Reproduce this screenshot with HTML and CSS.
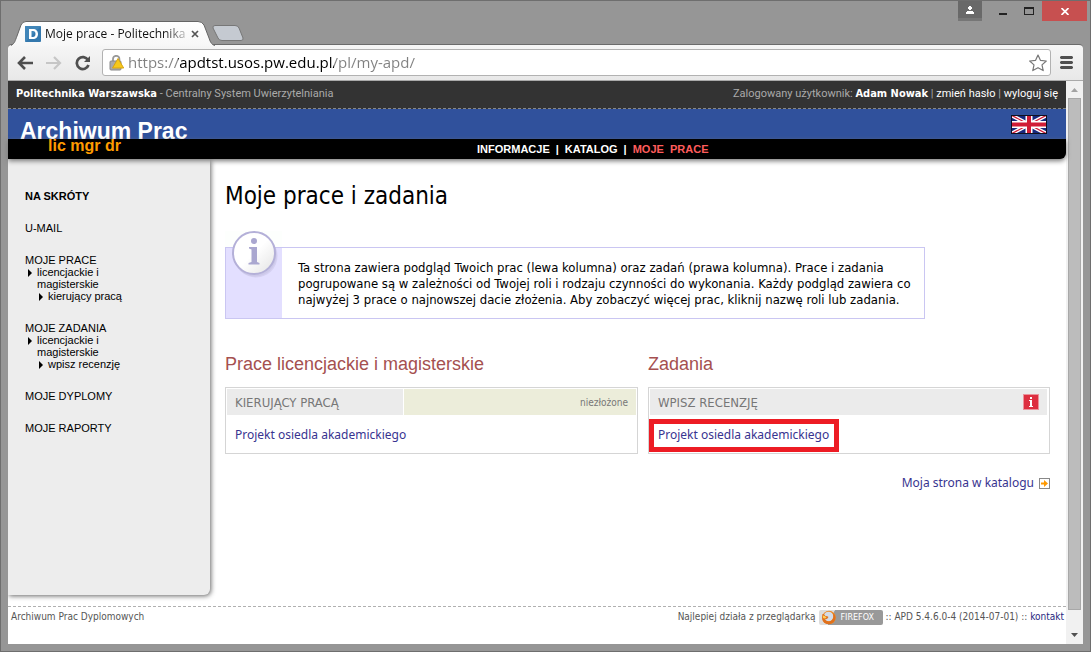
FILE: index.html
```
<!DOCTYPE html>
<html lang="pl">
<head>
<meta charset="utf-8">
<title>Moje prace - Politechnika Warszawska</title>
<link rel="stylesheet" href="styles.css">
</head>
<body>
<div class="window">
  <header class="titlebar">
    <div class="tab">
      <svg class="tab-shape" width="204" height="25" viewBox="0 0 204 25" aria-hidden="true">
        <defs><linearGradient id="tabfill" x1="0" y1="0" x2="0" y2="1"><stop offset="0" stop-color="#fff"/><stop offset="1" stop-color="#f7f7f7"/></linearGradient></defs>
        <path d="M0 25C4 22 4 20 6 15L10 4Q11.500 .5 15 .5H187Q191 .5 193 4L198 17Q200 24 204 24.500V25Z" fill="url(#tabfill)"/>
        <path d="M0 24.500C4 22 4 20 6 15L10 4Q11.500 .5 15 .5H187Q191 .5 193 4L198 17Q200 24 204 24.500" fill="none" stroke="#666"/>
      </svg>
      <svg class="favicon" width="16" height="16" viewBox="0 0 16 16" aria-hidden="true"><rect width="16" height="16" rx="1" fill="#3478ad"/><path d="M0 16L16 0H1Q0 0 0 1Z" fill="#4186b9"/><path fill="#fff" fill-rule="evenodd" d="M4 3h4c3 0 5 2 5 5s-2 5-5 5H4zM6.500 5v6H8c1.600 0 2.500-1.200 2.500-3S9.600 5 8 5z"/></svg>
      <span class="tab-title">Moje prace - Politechnika</span>
      <button class="tab-close" aria-label="Zamknij kartę"><svg width="8" height="8" viewBox="0 0 8 8"><path d="M1 1l6 6M7 1L1 7" stroke="#555" stroke-width="1.700"/></svg></button>
    </div>
    <button class="new-tab" aria-label="Nowa karta"><svg width="32" height="16" viewBox="0 0 32 16"><path d="M3 .5H23Q26 .5 27 3L31 13Q31.500 15.500 29 15.500H10Q7 15.500 6 13L1 3Q.5 .5 3 .5Z" fill="#c5cad1" stroke="#777"/></svg></button>
    <div class="controls">
      <button class="ctl user" aria-label="Użytkownik"><svg width="8" height="8" viewBox="0 0 8 8" shape-rendering="crispEdges"><path fill="#fff" d="M3 0h2v1h1v2H5v1H3V3H2V1h1zM1 5h6v1h1v2H0V6h1z"/></svg></button>
      <button class="ctl min" aria-label="Minimalizuj"><svg width="8" height="8" viewBox="0 0 8 8"><path fill="#222" d="M0 6h8v2H0z"/></svg></button>
      <button class="ctl max" aria-label="Maksymalizuj"><svg width="10" height="8" viewBox="0 0 10 8" shape-rendering="crispEdges"><path fill="#222" fill-rule="evenodd" d="M0 0h10v8H0zM1 2v5h8V2z"/></svg></button>
      <button class="ctl close" aria-label="Zamknij"><svg width="8" height="7" viewBox="0 0 8 7"><path d="M.5 0l7 7M7.500 0l-7 7" stroke="#fff" stroke-width="1.700"/></svg></button>
    </div>
  </header>

  <div class="toolbar">
    <button class="tool" aria-label="Wstecz"><svg width="16" height="14" viewBox="0 0 16 14" fill="none" stroke="#4f4f4f" stroke-width="2.600"><path d="M8 1L2 7l6 6M2 7h14"/></svg></button>
    <button class="tool" aria-label="Dalej"><svg width="16" height="14" viewBox="0 0 16 14" fill="none" stroke="#c6c6c6" stroke-width="2.200"><path d="M8 1l6 6-6 6M14 7H0"/></svg></button>
    <button class="tool" aria-label="Odśwież"><svg width="16" height="16" viewBox="0 0 16 16"><path d="M13 5A6 6 0 1 0 13.500 10" fill="none" stroke="#4f4f4f" stroke-width="2.700"/><path d="M15 1v6H9z" fill="#4f4f4f"/></svg></button>
    <div class="omnibox">
      <svg width="16" height="16" viewBox="0 0 16 16" aria-hidden="true"><path d="M4 7V4a3.200 3.200 0 0 1 6.400 0v3" fill="none" stroke="#999" stroke-width="1.800"/><rect x="1" y="6" width="11" height="9" rx="1" fill="#aaa" stroke="#888"/><path d="M9 3.500L14.700 13H3.500Z" fill="#f6c81b" stroke="#d8a411" stroke-linejoin="round"/></svg>
      <input class="url" type="text" aria-label="Adres" value="https://apdtst.usos.pw.edu.pl/pl/my-apd/">
      <button class="star" aria-label="Dodaj do zakładek"><svg width="18" height="18" viewBox="0 0 18 18"><path d="M9 1l2.400 5.300 5.900.7-4.300 3.900 1.200 5.700L9 13.700l-5.200 2.900L5 10.900.7 7l5.900-.7z" fill="#fff" stroke="#777" stroke-width="1.200" stroke-linejoin="round"/></svg></button>
    </div>
    <button class="menu" aria-label="Menu"><svg width="13" height="13" viewBox="0 0 13 13"><path fill="#505050" d="M1 0h11l1 1v1l-1 1H1L0 2V1zM1 5h11l1 1v1l-1 1H1L0 7V6zM1 10h11l1 1v1l-1 1H1l-1-1v-1z"/></svg></button>
  </div>

  <div class="viewport">
    <div class="page">
      <div class="topbar">
        <div><b>Politechnika Warszawska</b> - Centralny System Uwierzytelniania</div>
        <div>Zalogowany użytkownik: <b>Adam Nowak</b> | <a href="#haslo">zmień hasło</a> | <a href="#wyloguj">wyloguj się</a></div>
      </div>
      <div class="brandbar">
        <div class="brand">Archiwum Prac</div>
        <button class="flag" aria-label="English"><svg width="36" height="19" viewBox="0 0 36 19"><rect width="36" height="19" fill="#16277d"/><path d="M0 0l36 19M36 0L0 19" stroke="#fff" stroke-width="4"/><path d="M0 0l36 19M36 0L0 19" stroke="#d01c36" stroke-width="1.300"/><path d="M18 0v19M0 9.500h36" stroke="#fff" stroke-width="7"/><path d="M18 0v19M0 9.500h36" stroke="#d01c36" stroke-width="4"/><rect x=".5" y=".5" width="35" height="18" fill="none" stroke="#101020"/></svg></button>
      </div>
      <div class="navbar">
        <div class="levels">lic mgr dr</div>
        <nav class="nav"><a href="#info">INFORMACJE</a><span>|</span><a href="#katalog">KATALOG</a><span>|</span><a class="current" href="#moje">MOJE&nbsp; PRACE</a></nav>
      </div>

      <div class="columns">
        <aside class="sidebar">
          <b>NA SKRÓTY</b>
          <a href="#umail">U-MAIL</a>
          <div>
            <a href="#prace">MOJE PRACE</a>
            <a class="sub" href="#lic">licencjackie i magisterskie</a>
            <a class="sub deep" href="#kier">kierujący pracą</a>
          </div>
          <div>
            <a href="#zadania">MOJE ZADANIA</a>
            <a class="sub" href="#lic2">licencjackie i magisterskie</a>
            <a class="sub deep" href="#wpisz">wpisz recenzję</a>
          </div>
          <a href="#dyplomy">MOJE DYPLOMY</a>
          <a href="#raporty">MOJE RAPORTY</a>
        </aside>
        <main class="main">
          <h1>Moje prace i zadania</h1>
          <div class="notice">
            <div class="notice-side">
              <svg class="notice-icon" width="57" height="50" viewBox="0 0 57 50" aria-hidden="true">
                <defs><linearGradient id="disc" x1="0" y1="0" x2="1" y2="1"><stop offset=".5" stop-color="#fff"/><stop offset="1" stop-color="#e2e2e2"/></linearGradient></defs>
                <path d="M0 0h57v16H0z" fill="#fdfffd"/>
                <circle cx="31" cy="25" r="21.500" fill="#b9b5d8" opacity=".35"/>
                <circle cx="30" cy="24" r="21.500" fill="#b9b5d8" opacity=".3"/>
                <circle cx="29" cy="22" r="21" fill="url(#disc)" stroke="#b4b0d8" stroke-width="2"/>
                <circle cx="29" cy="10" r="3" fill="#aaa7d0"/>
                <path fill="#aaa7d0" d="M24 16h8v15l2.500 1v1.500h-11V32l3-1V18.500L24 17.500z"/>
              </svg>
            </div>
            <p>Ta strona zawiera podgląd Twoich prac (lewa kolumna) oraz zadań (prawa kolumna). Prace i zadania<br>pogrupowane są w zależności od Twojej roli i rodzaju czynności do wykonania. Każdy podgląd zawiera co<br>najwyżej 3 prace o najnowszej dacie złożenia. Aby zobaczyć więcej prac, kliknij nazwę roli lub zadania.</p>
          </div>
          <div class="panels">
            <section class="theses">
              <h2>Prace licencjackie i magisterskie</h2>
              <div class="panel">
                <div class="panel-head"><h3>KIERUJĄCY PRACĄ</h3><div class="status">niezłożone</div></div>
                <div class="panel-row"><a href="#p1">Projekt osiedla akademickiego</a></div>
              </div>
            </section>
            <section class="tasks">
              <h2>Zadania</h2>
              <div class="panel">
                <div class="panel-head wide"><h3>WPISZ RECENZJĘ</h3><svg width="16" height="16" viewBox="0 0 16 16" aria-hidden="true"><rect x=".5" y=".5" width="15" height="15" fill="#dd2f40" stroke="#eb949c"/><path fill="#fff" d="M7 3h2v2H7zM6 6h3v6h1v1H6v-1h1V7H6z"/></svg></div>
                <div class="panel-row"><a class="marked" href="#p2">Projekt osiedla akademickiego</a></div>
              </div>
              <a class="catalog" href="#strona">Moja strona w katalogu<svg width="11" height="11" viewBox="0 0 11 11" aria-hidden="true"><rect x=".5" y=".5" width="10" height="10" fill="#fff" stroke="#888"/><path fill="#ff9900" d="M2 4.500h3V2l4 3.500L5 9V6.500H2z"/></svg></a>
            </section>
          </div>
        </main>
      </div>

      <footer class="footer">
        <div>Archiwum Prac Dyplomowych</div>
        <div class="foot-right"><span>Najlepiej działa z przeglądarką</span>
          <span class="badge"><svg width="18" height="15" viewBox="0 0 18 15" aria-hidden="true"><circle cx="10" cy="7.500" r="6.800" fill="#ee8a24"/><circle cx="9.500" cy="6.500" r="4.800" fill="#d3dce8"/><path d="M3.500 4Q5 3.500 6.500 6q2 0 3 1Q8 10 5.500 9 8 12.500 12 11 15.500 8 14 3q3.500 3 2 7-2 4-6.500 4.200Q4 14 3.200 9z" fill="#e0701c"/><path d="M4 5.500Q6 5.500 7.500 7.500 6 9 4 8z" fill="#ffce57"/></svg><span>FIREFOX</span></span>
          <span>:: APD 5.4.6.0-4 (2014-07-01) :: <a href="#kontakt">kontakt</a></span></div>
      </footer>
    </div>
    <div class="scrollbar" aria-hidden="true">
      <svg width="17" height="17" viewBox="0 0 17 17"><path d="M5 11l3.500-4 3.500 4z" fill="#a3a3a3"/></svg>
      <div class="thumb"></div>
      <svg width="17" height="17" viewBox="0 0 17 17"><path d="M5 6h7l-3.500 4z" fill="#505050"/></svg>
    </div>
  </div>
</div>
</body>
</html>
```
FILE: styles.css
```
* { box-sizing: border-box; }
body { margin: 0; font: 12px/16px "Noto Sans", "DejaVu Sans Condensed", sans-serif; color: #000; }
button { border: 0; padding: 0; margin: 0; background: none; display: flex; align-items: center; justify-content: center; }
a { color: inherit; text-decoration: none; }
svg { display: block; flex: none; }
h1, h2, h3, p { margin: 0; font-weight: normal; }

.window { min-height: 100vh; display: flex; flex-direction: column; padding: 0 7px 7px; background: #969696; border: 1px solid #6e6e6e; }

.titlebar { height: 43px; display: flex; align-items: flex-start; font: 12px/16px "Open Sans", sans-serif; }
.tab { position: relative; z-index: 1; width: 204px; height: 25px; margin: 20px 0 0 3px; padding: 0 14px; display: flex; align-items: center; gap: 4px; }
.tab-shape { position: absolute; left: 0; top: 0; }
.favicon, .tab-title, .tab-close { position: relative; }
.tab-title { flex: 1; white-space: nowrap; color: transparent; background: linear-gradient(90deg, #111 85%, #bbb) text; }
.tab-close { width: 12px; height: 16px; }
.new-tab { margin: 24px 0 0 -3px; }
.controls { margin: 0 -4px 0 auto; display: flex; }
.ctl { height: 20px; }
.user { width: 24px; background: #696969; border-bottom: 3px solid #767676; }
.min { width: 42px; padding-left: 0; }
.max { width: 18px; justify-content: flex-start; }
.close { width: 45px; background: #c75050; }

.toolbar { display: flex; align-items: center; height: 37px; padding: 0 10px 0 9px; background: linear-gradient(#f6f6f6, #e8e8e8); border-top: 1px solid #6b6b6b; border-bottom: 1px solid #aaa; border-radius: 4px 4px 0 0; }
.tool { width: 29px; height: 28px; justify-content: flex-start; }
.omnibox { flex: 1; height: 27px; margin-right: 9px; padding: 0 3px 0 6px; display: flex; align-items: center; gap: 3px; background: #fff; border: 1px solid #b2b2b2; border-radius: 3px; }
.tool + .omnibox { margin-left: -2px; }
.url { flex: 1; min-width: 0; height: 24px; border: 0; padding: 0 0 2px; outline: 0; font: 15px/24px "Open Sans", sans-serif; color: transparent; background: linear-gradient(90deg, #808080 50px, #000 50px, #000 206px, #808080 206px) text; }

.viewport { flex: 1; display: flex; background: #fff; }
.page { flex: 1; display: flex; flex-direction: column; }
.scrollbar { width: 17px; display: flex; flex-direction: column; background: #f1f1f1; }
.thumb { flex: 1; margin: 0 2px 17px; background: #bcbcbc; border: 1px solid #a8a8a8; }

.topbar { height: 28px; padding: 0 8px 1px; display: flex; align-items: center; justify-content: space-between; background: #333; border-bottom: 1px dashed #888; color: #aaa; font: 11px/16px Roboto, sans-serif; }
.topbar b, .topbar a { color: #fff; }
.topbar b { font-family: "DejaVu Sans Condensed", sans-serif; }
.brandbar { height: 30px; padding: 0 19px 0 12px; display: flex; align-items: center; justify-content: space-between; background: #30519c; font-family: "Liberation Sans", Arial, sans-serif; }
.brand { padding-top: 14px; font-size: 23px; line-height: 30px; font-weight: bold; color: #fff; }
.navbar { height: 20px; padding-left: 40px; display: grid; grid-template-columns: 6fr auto 5fr; background: #000; border-radius: 0 0 6px 0; box-shadow: 0 2px 5px #777; font: bold 11px/20px "Liberation Sans", Arial, sans-serif; color: #fff; z-index: 1; }
.levels { color: #ff9c00; font-size: 16px; line-height: 14px; }
.nav { display: flex; gap: 6px; }
.nav .current { color: #ff5c5c; }

.columns { flex: 1; display: flex; padding-bottom: 11px; }
.sidebar { width: 202px; padding: 31px 80px 20px 17px; display: flex; flex-direction: column; gap: 20px; background: #ededed; border-radius: 0 0 6px 0; box-shadow: 1px 1px 5px #666; clip-path: inset(0 -8px -8px 0); font: 11px/12px "Liberation Sans", Arial, sans-serif; }
.sidebar > *, .sidebar div > a { display: block; white-space: nowrap; }
.sidebar .sub { position: relative; padding-left: 12px; white-space: normal; }
.sidebar .deep { padding-left: 23px; white-space: nowrap; }
.sub::before { content: ""; position: absolute; left: 3px; top: 3px; border: 4px solid transparent; border-left-color: #000; border-right: 0; }
.deep::before { left: 14px; }

.main { flex: 1; padding: 18px 16px 0 15px; }
h1 { padding-top: 1px; font: 24px/36px "DejaVu Sans Condensed", sans-serif; }
.notice { margin-top: 33px; max-width: 700px; display: flex; border: 1px solid #cac6f2; }
.notice-side { position: relative; width: 56px; background: #e3dfff; }
.notice-icon { position: absolute; left: -1px; top: -17px; }
.notice p { padding: 12px 0 10px 16px; white-space: nowrap; font: 13px/16px "DejaVu Sans Condensed", sans-serif; }
.panels { margin-top: 33px; display: flex; gap: 10px; }
.theses { flex: 413; }
.tasks { flex: 402; }
h2 { font: 18px/24px "Liberation Sans", Arial, sans-serif; color: #a55050; }
.panel { margin-top: 11px; padding: 1px; border: 1px solid #d5d5d5; }
.panel-head { height: 26px; display: flex; gap: 1px; color: #777; }
h3 { width: 176px; padding: 0 8px; font: 13px/28px "DejaVu Sans Condensed", sans-serif; background: #ebebeb; overflow: hidden; }
.wide h3 { height: 26px; }
.status { flex: 1; padding: 0 8px; text-align: right; font: 10px/28px "DejaVu Sans Condensed", sans-serif; background: #ecedda; overflow: hidden; }
.wide { align-items: center; justify-content: space-between; padding-right: 8px; margin-right: 1px; background: #ebebeb; }
.panel-row { padding: 12px 8px 9px; color: #383490; }
.marked { position: relative; }
.marked::after { content: ""; position: absolute; inset: -7px -10px -9px -9px; border: 5px solid #ed1c24; }
.catalog { margin-top: 21px; display: flex; align-items: center; justify-content: flex-end; gap: 5px; color: #383490; }

.footer { padding: 2px 2px 19px 3px; display: flex; justify-content: space-between; border-top: 1px dashed #b0b0b0; font-family: "DejaVu Sans Condensed", sans-serif; font-size: 10px; color: #555; }
.foot-right { display: flex; align-items: center; gap: 3px; }
.footer a { color: #262680; }
.badge { width: 64px; height: 15px; display: flex; align-items: center; gap: 4px; border-radius: 2px; background: linear-gradient(115deg, #ddd 22%, #999 23%); color: #fff; font: 8px/15px "DejaVu Sans", sans-serif; }
```
